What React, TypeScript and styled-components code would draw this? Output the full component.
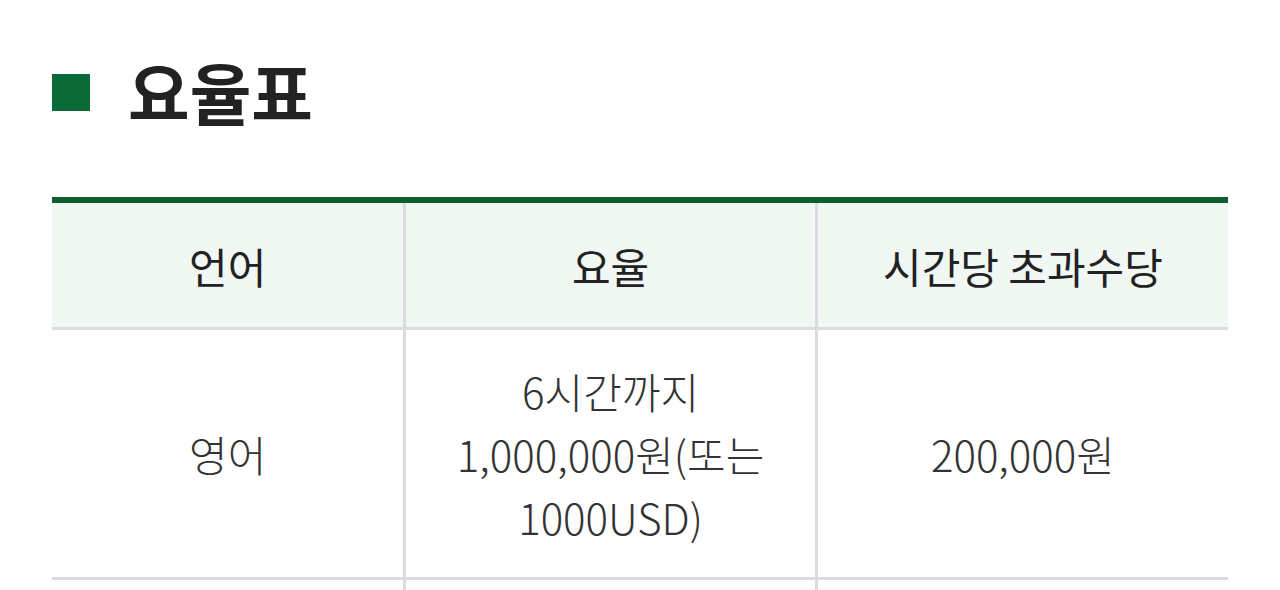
import React from 'react';
import styled, { createGlobalStyle } from 'styled-components';

interface Rate {
  language: string;
  rate: string;
  overtime: string;
}

const rates: Rate[] = [
  { language: '영어', rate: '6시간까지 1,000,000원(또는 1000USD)', overtime: '200,000원' },
];

export default function App() {
  return (
    <>
      <GlobalStyle />
      <Page>
        <Heading>
          <Marker />
          <Title>요율표</Title>
        </Heading>
        <Table>
          <colgroup>
            <col style={{ width: '30%' }} />
            <col style={{ width: '35%' }} />
            <col style={{ width: '35%' }} />
          </colgroup>
          <thead>
            <tr>
              <HeadCell>언어</HeadCell>
              <HeadCell>요율</HeadCell>
              <HeadCell>시간당 초과수당</HeadCell>
            </tr>
          </thead>
          <tbody>
            {rates.map(r => (
              <tr key={r.language}>
                <BodyCell>{r.language}</BodyCell>
                <BodyCell>{r.rate}</BodyCell>
                <BodyCell>{r.overtime}</BodyCell>
              </tr>
            ))}
            {/* next row continues below the fold */}
            <tr>
              <BodyCell />
              <BodyCell />
              <BodyCell />
            </tr>
          </tbody>
        </Table>
      </Page>
    </>
  );
}

const GlobalStyle = createGlobalStyle`
  html, body {
    margin: 0;
    background: #ffffff;
    overflow: hidden;
  }
  body {
    font-family: "Noto Sans CJK KR", "Noto Sans", sans-serif;
    color: #222222;
  }
`;

const Page = styled.div`
  padding: 0 52px;
`;

const Heading = styled.div`
  display: flex;
  align-items: center;
  gap: 38px;
  height: 66px;
  padding-top: 58px;
  margin-bottom: 73px;
`;

const Marker = styled.span`
  position: relative;
  width: 38px;
  height: 37px;
  flex-shrink: 0;
  margin-top: 2px;
  background: #0a6a37;

  &::after {
    content: '';
    position: absolute;
    left: 22px;
    top: 24px;
    width: 25px;
    height: 24px;
    background: #ecf4ef;
    z-index: -1;
  }
`;

const Title = styled.h2`
  margin: 0;
  font-size: 67px;
  font-weight: 700;
  line-height: 66px;
  letter-spacing: 0;
  color: #222222;
`;

const Table = styled.table`
  width: 100%;
  border-collapse: collapse;
  table-layout: fixed;
  border-top: 6px solid #0d5e31;
`;

const HeadCell = styled.th`
  height: 124px;
  padding: 0 16px;
  background: #f1f7f3;
  border-bottom: 3px solid #dbdbe1;
  border-left: 3px solid #dbdbe1;
  font-size: 42px;
  font-weight: 400;
  line-height: 63px;
  color: #222222;
  text-align: center;
  vertical-align: middle;

  &:first-child {
    border-left: none;
  }
`;

const BodyCell = styled.td`
  padding: 29px 36px;
  border-bottom: 3px solid #dbdbe1;
  border-left: 3px solid #dbdbe1;
  font-size: 42px;
  font-weight: 300;
  line-height: 63px;
  color: #333333;
  text-align: center;
  vertical-align: middle;
  word-break: keep-all;

  &:empty {
    height: 63px;
  }

  &:first-child {
    border-left: none;
  }
`;
